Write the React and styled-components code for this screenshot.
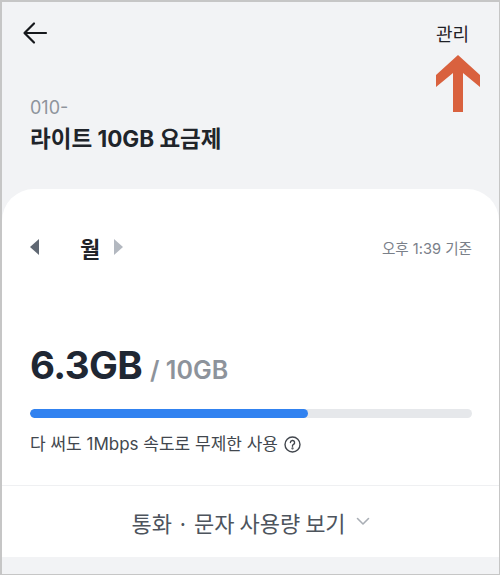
import styled, { createGlobalStyle } from 'styled-components';

const GlobalStyle = createGlobalStyle`
  body {
    margin: 0;
    font-family: "Inter", "Noto Sans CJK KR", sans-serif;
  }
  * { box-sizing: border-box; }
`;

const Frame = styled.div`
  position: relative;
  width: 500px;
  height: 575px;
  background: #f2f3f5;
  border: 1px solid #c6c6c6;
  border-left-width: 2px;
  border-top-width: 2px;
  display: flex;
  flex-direction: column;
  overflow: hidden;
`;

const Header = styled.div`
  height: 62px;
  padding: 0 30px 0 20px;
  display: flex;
  align-items: center;
  justify-content: space-between;
`;

const IconButton = styled.button`
  border: 0;
  background: none;
  padding: 0;
  display: flex;
  cursor: pointer;
`;

const HeaderAction = styled.span`
  font-size: 18px;
  color: #1f2126;
  font-family: "Noto Sans CJK KR", sans-serif;
`;

const Annotation = styled.svg`
  position: absolute;
  left: 433px;
  top: 52px;
`;

const PlanInfo = styled.div`
  padding: 33px 30px 0 28px;
  display: flex;
  flex-direction: column;
  gap: 6px;
`;

const Number = styled.div`
  font-size: 18px;
  line-height: 22px;
  color: #8e949c;
`;

const PlanName = styled.div`
  font-size: 22.5px;
  line-height: 28px;
  font-weight: 700;
  color: #20242a;
`;

const Card = styled.div`
  margin-top: 36px;
  background: #fff;
  border-radius: 32px 32px 0 0;
  display: flex;
  flex-direction: column;
`;

const CardBody = styled.div`
  padding: 43px 27px 30px 28px;
  display: flex;
  flex-direction: column;
`;

const PeriodRow = styled.div`
  height: 30px;
  display: flex;
  align-items: center;
  justify-content: space-between;
`;

const Period = styled.div`
  display: flex;
  align-items: center;
`;

const Caret = styled.span`
  width: 0;
  height: 0;
  border-top: 8px solid transparent;
  border-bottom: 8px solid transparent;
  ${({ $dir }) => ($dir === 'left' ? 'border-right' : 'border-left')}: 9px solid
    ${({ $muted }) => ($muted ? '#b3b8c0' : '#606873')};
`;

const Month = styled.span`
  font-size: 22px;
  font-weight: 700;
  color: #1f2328;
  margin: 0 14px 0 41px;
`;

const Stamp = styled.span`
  font-size: 14.6px;
  color: #7a8089;
`;

const Usage = styled.div`
  margin-top: 81px;
  display: flex;
  align-items: baseline;
  gap: 8px;
  line-height: 44px;
`;

const Used = styled.span`
  font-size: 38.5px;
  font-weight: 700;
  letter-spacing: -0.6px;
  color: #1f2733;
`;

const Total = styled.span`
  font-size: 25px;
  font-weight: 600;
  color: #8d939b;
`;

const Track = styled.div`
  margin-top: 17px;
  height: 9px;
  border-radius: 5px;
  background: #e6e8eb;
  overflow: hidden;
`;

const Fill = styled.div`
  height: 100%;
  border-radius: 5px;
  background: #3182f0;
`;

const Note = styled.div`
  margin-top: 15px;
  display: flex;
  align-items: center;
  gap: 6px;
  font-size: 17px;
  line-height: 22px;
  color: #42474e;
`;

const Footer = styled.button`
  height: 72px;
  border: 0;
  border-top: 1px solid #eff0f2;
  background: #fff;
  display: flex;
  align-items: center;
  justify-content: center;
  gap: 10px;
  font-family: "Noto Sans CJK KR", sans-serif;
  font-size: 22px;
  color: #4d545d;
  cursor: pointer;
`;

export default function App() {
  const used = 6.3;
  const total = 10;

  return (
    <>
      <GlobalStyle />
      <Frame>
        <Header>
          <IconButton aria-label="뒤로">
            <svg width="26" height="24" viewBox="0 0 26 24" fill="none" stroke="#16181c" strokeWidth="2.2" strokeLinecap="round" strokeLinejoin="round">
              <path d="M24 12H3M12 2.5L2.5 12l9.5 9.5" />
            </svg>
          </IconButton>
          <HeaderAction>관리</HeaderAction>
        </Header>

        <Annotation width="46" height="60" viewBox="0 0 46 60">
          <polygon points="23,1 45,21 45,33 28,19 28,58 18,58 18,19 1,33 1,21" fill="#d9613e" />
        </Annotation>

        <PlanInfo>
          <Number>010-</Number>
          <PlanName>라이트 10GB 요금제</PlanName>
        </PlanInfo>

        <Card>
          <CardBody>
            <PeriodRow>
              <Period>
                <Caret $dir="left" />
                <Month>월</Month>
                <Caret $dir="right" $muted />
              </Period>
              <Stamp>오후 1:39 기준</Stamp>
            </PeriodRow>

            <Usage>
              <Used>{used}GB</Used>
              <Total>/ {total}GB</Total>
            </Usage>

            <Track>
              <Fill style={{ width: `${(used / total) * 100}%` }} />
            </Track>

            <Note>
              다 써도 1Mbps 속도로 무제한 사용
              <svg width="17" height="17" viewBox="0 0 17 17" fill="none" stroke="#42474e" strokeWidth="1.4" strokeLinecap="round">
                <circle cx="8.5" cy="8.5" r="7.5" />
                <path d="M6.4 6.6a2.1 2.1 0 1 1 2.9 1.9c-.5.3-.8.6-.8 1.2v.5" />
                <circle cx="8.5" cy="12.4" r="0.4" fill="#42474e" />
              </svg>
            </Note>
          </CardBody>

          <Footer>
            통화 · 문자 사용량 보기
            <svg width="14" height="9" viewBox="0 0 14 9" fill="none" stroke="#a9aeb5" strokeWidth="1.6" strokeLinecap="round" strokeLinejoin="round">
              <path d="M1.5 1.5L7 7l5.5-5.5" />
            </svg>
          </Footer>
        </Card>
      </Frame>
    </>
  );
}
